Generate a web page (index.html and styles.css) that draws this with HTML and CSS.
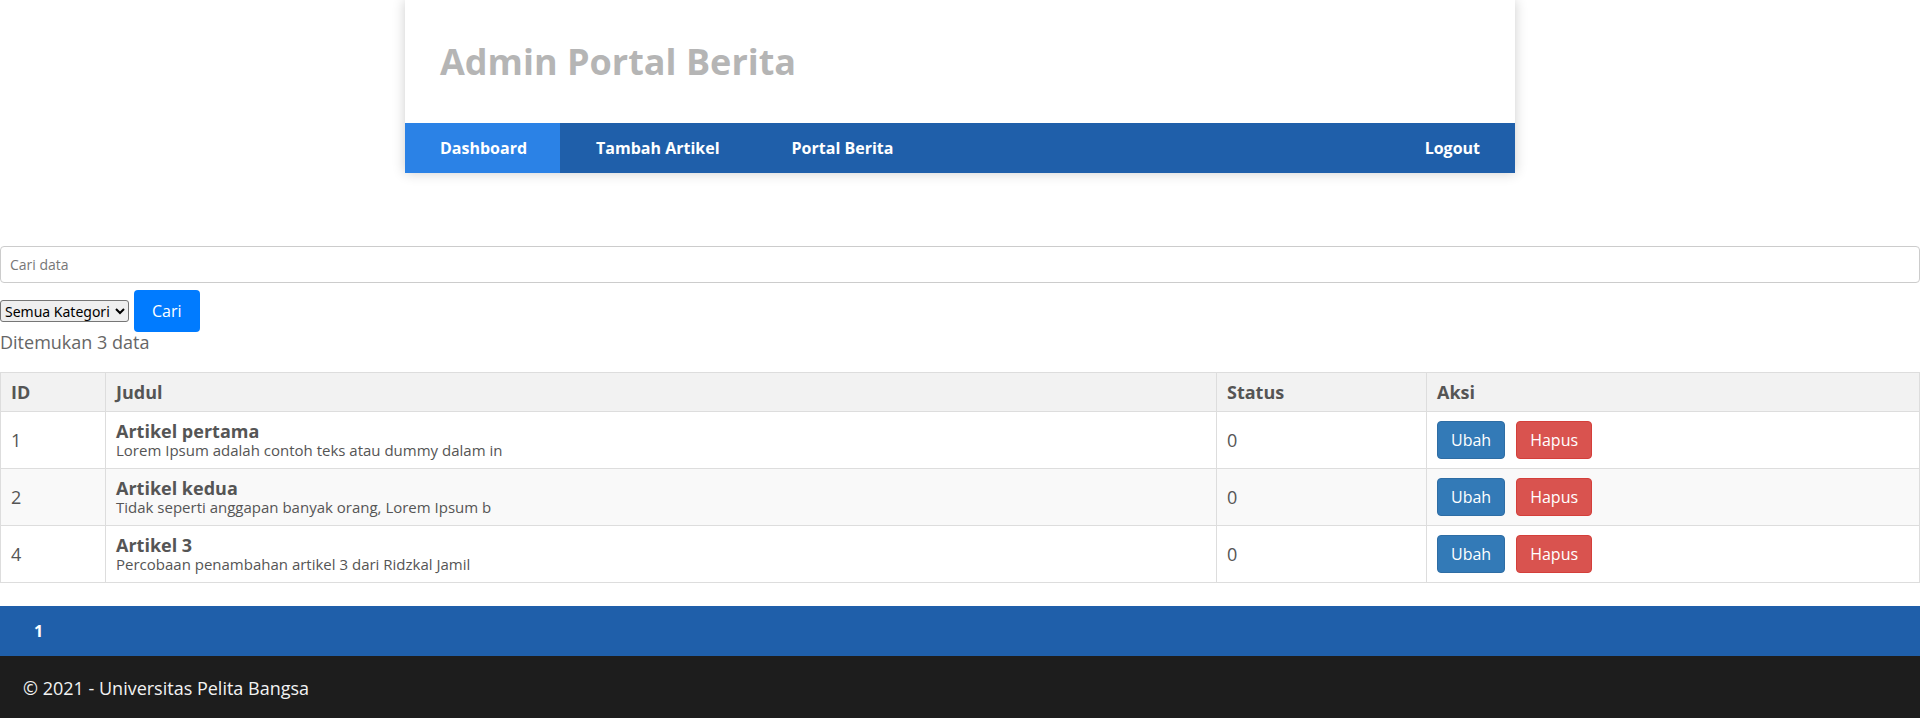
FILE: index.html
```html
<!DOCTYPE html>
<html lang="id">
<head>
<meta charset="utf-8">
<title>Admin Portal Berita</title>
<link rel="stylesheet" href="styles.css">
</head>
<body>
<div class="container">
  <header class="header">
    <h1 class="brand">Admin Portal Berita</h1>
  </header>
  <nav class="nav">
    <a class="nav-link active" href="#">Dashboard</a>
    <a class="nav-link" href="#">Tambah Artikel</a>
    <a class="nav-link" href="#">Portal Berita</a>
    <a class="nav-link logout" href="#">Logout</a>
  </nav>
</div>

<main class="main">
  <form class="search">
    <input class="search-input" type="text" placeholder="Cari data">
    <div class="search-row">
      <select class="search-select">
        <option>Semua Kategori</option>
      </select>
      <button class="btn-cari" type="button">Cari</button>
    </div>
  </form>
  <p class="found">Ditemukan 3 data</p>

  <table class="table">
    <colgroup>
      <col class="col-id">
      <col class="col-judul">
      <col class="col-status">
      <col class="col-aksi">
    </colgroup>
    <thead>
      <tr>
        <th>ID</th>
        <th>Judul</th>
        <th>Status</th>
        <th>Aksi</th>
      </tr>
    </thead>
    <tbody>
      <tr>
        <td>1</td>
        <td><div class="title">Artikel pertama</div><div class="desc">Lorem Ipsum adalah contoh teks atau dummy dalam in</div></td>
        <td>0</td>
        <td><div class="actions"><a class="btn btn-ubah" href="#">Ubah</a><a class="btn btn-hapus" href="#">Hapus</a></div></td>
      </tr>
      <tr>
        <td>2</td>
        <td><div class="title">Artikel kedua</div><div class="desc">Tidak seperti anggapan banyak orang, Lorem Ipsum b</div></td>
        <td>0</td>
        <td><div class="actions"><a class="btn btn-ubah" href="#">Ubah</a><a class="btn btn-hapus" href="#">Hapus</a></div></td>
      </tr>
      <tr>
        <td>4</td>
        <td><div class="title">Artikel 3</div><div class="desc">Percobaan penambahan artikel 3 dari Ridzkal Jamil</div></td>
        <td>0</td>
        <td><div class="actions"><a class="btn btn-ubah" href="#">Ubah</a><a class="btn btn-hapus" href="#">Hapus</a></div></td>
      </tr>
    </tbody>
  </table>
</main>

<div class="pagination">
  <a class="page" href="#">1</a>
</div>

<footer class="footer">
  <p>&copy; 2021 - Universitas Pelita Bangsa</p>
</footer>
</body>
</html>
```

FILE: styles.css
```css
* { box-sizing: border-box; }

html, body {
  margin: 0;
  padding: 0;
}

body {
  font-family: "Open Sans", "Noto Sans", sans-serif;
  color: #555;
  background: #fff;
}

a { text-decoration: none; }

.container {
  width: 1110px;
  margin: 0 auto;
  background: #fff;
  box-shadow: 0 0 12px rgba(0, 0, 0, 0.2);
}

.header {
  height: 123px;
  padding: 0 35px;
  display: flex;
  align-items: center;
}

.brand {
  margin: 0;
  font-size: 36px;
  font-weight: 700;
  color: #b5b5b5;
  line-height: 1.2;
}

.nav {
  display: flex;
  height: 50px;
  background: #1f5faa;
}

.nav-link {
  display: flex;
  align-items: center;
  padding: 0 36px;
  color: #fff;
  font-weight: 700;
  font-size: 16px;
}

.nav-link.active {
  background: #2b82e6;
  padding: 0 33px 0 35px;
}

.nav-link.logout {
  margin-left: auto;
  padding-right: 35px;
}

.main {
  padding-top: 73px;
}

.search {
  margin: 0;
}

.search-input {
  display: block;
  width: 100%;
  height: 37px;
  padding: 6px 9px;
  border: 1px solid #ccc;
  border-radius: 4px;
  font-family: "Open Sans", sans-serif;
  font-size: 14px;
  color: #555;
  outline: none;
}

.search-input::placeholder {
  color: #777;
}

.search-row {
  display: flex;
  align-items: center;
  gap: 5px;
  margin-top: 7px;
}

.search-select {
  width: 129px;
  height: 22px;
  font-family: "Noto Sans", "DejaVu Sans", sans-serif;
  font-size: 14px;
  color: #000;
  background: #efefef;
  border: 1px solid #767676;
  border-radius: 3px;
  padding: 0;
}

.btn-cari {
  height: 42px;
  padding: 0 18px;
  background: #007bff;
  color: #fff;
  border: none;
  border-radius: 4px;
  font-family: "Open Sans", sans-serif;
  font-size: 16px;
}

.found {
  margin: 0 0 20px;
  font-size: 18px;
  line-height: 20px;
  color: #666;
}

.table {
  width: 100%;
  border-collapse: collapse;
  table-layout: fixed;
  border: 1px solid #ddd;
}

.col-id { width: 105px; }
.col-status { width: 210px; }
.col-aksi { width: 493px; }

.table th,
.table td {
  border: 1px solid #ddd;
  padding: 8px 10px;
  text-align: left;
  vertical-align: middle;
}

.table th {
  background: #f2f2f2;
  font-size: 18px;
  font-weight: 700;
  line-height: 22px;
  color: #555;
}

.table td {
  padding-top: 9px;
  padding-bottom: 9px;
  font-size: 18px;
  line-height: 22px;
  color: #555;
}

.table tbody tr:nth-child(even) td {
  background: #f9f9f9;
}

.title {
  font-weight: 700;
  font-size: 18px;
  line-height: 20px;
}

.desc {
  font-size: 15px;
  line-height: 18px;
}

.actions {
  display: flex;
  gap: 11px;
}

.btn {
  display: inline-block;
  padding: 6px 13px;
  font-size: 16px;
  line-height: 24px;
  color: #fff;
  border-radius: 4px;
  border: 1px solid transparent;
}

.btn-ubah {
  background: #337ab7;
  border-color: #2e6da4;
}

.btn-hapus {
  background: #d9534f;
  border-color: #d43f3a;
}

.pagination {
  margin-top: 23px;
  height: 50px;
  background: #1f5faa;
  display: flex;
  align-items: center;
  padding-left: 34px;
}

.page {
  color: #fff;
  font-weight: 700;
  font-size: 16px;
}

.footer {
  background: #1d1d1d;
  height: 63px;
  display: flex;
  align-items: center;
  padding-left: 23px;
}

.footer p {
  margin: 0;
  color: #f2f2f2;
  font-size: 18px;
}
```
